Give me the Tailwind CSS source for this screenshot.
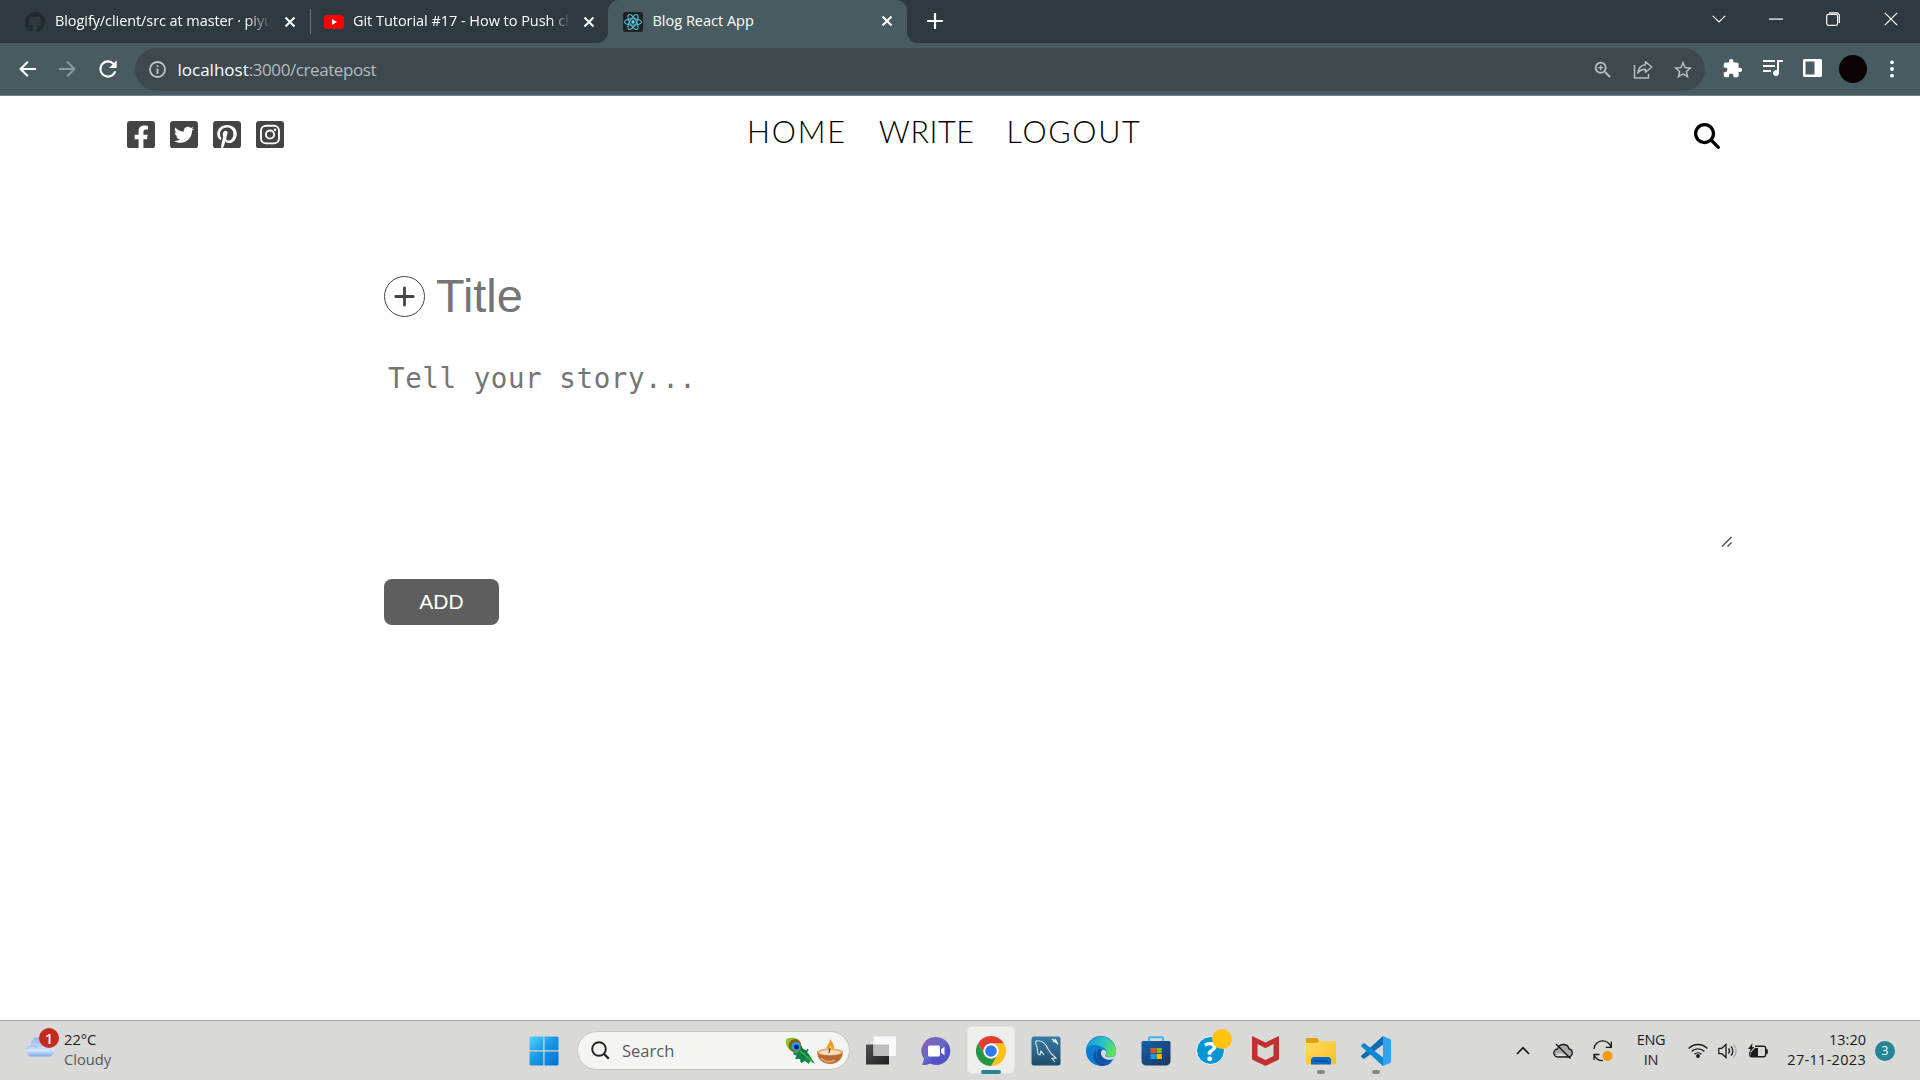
<!DOCTYPE html>
<html lang="en">
<head>
<meta charset="utf-8">
<title>Blog React App</title>
<script src="https://cdn.jsdelivr.net/npm/@tailwindcss/browser@4"></script>
</head>
<body class="flex h-[1080px] w-[1920px] flex-col overflow-hidden bg-white font-['Open_Sans',sans-serif]">

<!-- Tab strip -->
<header class="flex h-[43px] shrink-0 items-start bg-[#2e3a3f] text-[14.5px] leading-[43px] text-white">
  <div class="flex h-[43px] w-[310px] items-center pl-[25px]">
    <svg class="size-5 shrink-0" viewBox="0 0 16 16" fill="#24292e"><path d="M8 0C3.58 0 0 3.58 0 8c0 3.54 2.29 6.53 5.47 7.59.4.07.55-.17.55-.38 0-.19-.01-.82-.01-1.49-2.01.37-2.53-.49-2.69-.94-.09-.23-.48-.94-.82-1.13-.28-.15-.68-.52-.01-.53.63-.01 1.08.58 1.23.82.72 1.21 1.87.87 2.33.66.07-.52.28-.87.51-1.07-1.78-.2-3.64-.89-3.64-3.95 0-.87.31-1.59.82-2.15-.08-.2-.36-1.02.08-2.12 0 0 .67-.21 2.2.82.64-.18 1.32-.27 2-.27s1.36.09 2 .27c1.53-1.04 2.2-.82 2.2-.82.44 1.1.16 1.92.08 2.12.51.56.82 1.27.82 2.15 0 3.07-1.87 3.75-3.65 3.95.29.25.54.73.54 1.48 0 1.07-.01 1.93-.01 2.2 0 .21.15.46.55.38A8.01 8.01 0 0 0 16 8c0-4.42-3.58-8-8-8z"/></svg>
    <div class="ml-[10px] h-[43px] w-[217px] overflow-hidden whitespace-nowrap leading-[41px] tracking-[-0.08px] [mask-image:linear-gradient(to_right,black_88%,transparent)]">Blogify/client/src at master · piyu</div>
    <svg class="ml-[12px] size-3 shrink-0" viewBox="0 0 12 12" stroke="#fff" stroke-width="2"><path d="M1.5 1.5l9 9M10.5 1.5l-9 9"/></svg>
  </div>
  <div class="mt-[9px] h-[25px] w-px bg-[#6b777a]"></div>
  <div class="flex h-[43px] w-[297px] items-center pl-[13px]">
    <svg class="h-[14px] w-5 shrink-0" viewBox="0 0 20 14"><rect width="20" height="14" rx="3.5" fill="#f00"/><path d="M8 4v6l5-3z" fill="#fff"/></svg>
    <div class="ml-[9px] h-[43px] w-[217px] overflow-hidden whitespace-nowrap leading-[41px] tracking-[-0.04px] [mask-image:linear-gradient(to_right,black_91%,transparent)]">Git Tutorial #17 - How to Push ch</div>
    <svg class="ml-[13px] size-3 shrink-0" viewBox="0 0 12 12" stroke="#fff" stroke-width="2"><path d="M1.5 1.5l9 9M10.5 1.5l-9 9"/></svg>
  </div>
  <div class="relative flex h-[43px] w-[299px] items-center rounded-t-[11px] bg-[#485b60] pl-[15px]">
    <svg class="absolute bottom-0 -left-[11px] size-[11px]" viewBox="0 0 11 11" fill="#485b60"><path d="M11 0v11H0A11 11 0 0 0 11 0z"/></svg>
    <svg class="absolute bottom-0 -right-[11px] size-[11px]" viewBox="0 0 11 11" fill="#485b60"><path d="M0 0v11h11A11 11 0 0 1 0 0z"/></svg>
    <svg class="size-5" viewBox="0 0 20 20"><rect width="20" height="20" rx="2" fill="#222"/><g fill="none" stroke="#53c1de" stroke-width="1.1"><ellipse cx="10" cy="10" rx="8.5" ry="3.3"/><ellipse cx="10" cy="10" rx="8.5" ry="3.3" transform="rotate(60 10 10)"/><ellipse cx="10" cy="10" rx="8.5" ry="3.3" transform="rotate(120 10 10)"/></g><circle cx="10" cy="10" r="1.7" fill="#61dafb"/></svg>
    <span class="-mt-[2px] ml-[9.5px] leading-[41px]">Blog React App</span>
    <svg class="absolute top-[15px] left-[273px] size-3" viewBox="0 0 12 12" stroke="#fff" stroke-width="2"><path d="M1.5 1.5l9 9M10.5 1.5l-9 9"/></svg>
  </div>
  <svg class="mt-[13px] ml-[20px] size-4" viewBox="0 0 16 16" stroke="#fff" stroke-width="2.2" stroke-linecap="round"><path d="M8 1v14M1 8h14"/></svg>
  <div class="ml-auto flex h-[37px] items-center pr-[22px]">
    <svg class="mr-[43px] h-2 w-[14px]" viewBox="0 0 14 8" fill="none" stroke="#fff" stroke-width="1.1"><path d="M.8.8L7 7l6.200-6.200"/></svg>
    <svg class="mr-[43px] h-[2px] w-[14px]" viewBox="0 0 14 2"><rect y=".5" width="14" height="1.200" fill="#fff"/></svg>
    <svg class="mr-[44px] size-[14px]" viewBox="0 0 14 14" fill="none" stroke="#fff" stroke-width="1.200"><rect x=".7" y="2.400" width="10.900" height="10.900" rx="1.800"/><path d="M3 .8h7.500a2.800 2.800 0 0 1 2.800 2.800V11"/></svg>
    <svg class="size-[14px]" viewBox="0 0 14 14" stroke="#fff" stroke-width="1.200"><path d="M.8.8l12.400 12.400M13.200.8L.8 13.200"/></svg>
  </div>
</header>

<!-- Toolbar -->
<div class="flex h-[53px] shrink-0 items-start border-b border-[#70848a] bg-[#485b60] pt-[5px]">
  <div class="flex h-[43px] w-[135px] items-center pl-[19px]">
    <svg class="-mt-[2px] h-4 w-[17px]" viewBox="0 0 17 16" fill="none" stroke="#fff" stroke-width="2.100"><path d="M17 8H1.800M8.800.8L1.600 8l7.200 7.200"/></svg>
    <svg class="-mt-[2px] ml-[23px] h-4 w-[17px]" viewBox="0 0 17 16" fill="none" stroke="#8d999c" stroke-width="2.100"><path d="M0 8h15.200M8.200.8L15.400 8l-7.200 7.200"/></svg>
    <svg class="-mt-[2px] ml-[19px] size-[26px]" viewBox="0 0 24 24" fill="#fff"><path d="M17.650 6.350A7.960 7.960 0 0 0 12 4a8 8 0 1 0 7.730 10h-2.080A6 6 0 1 1 12 6c1.660 0 3.140.69 4.220 1.780L13 11h7V4z"/></svg>
  </div>
  <div class="flex h-[43px] w-[1570px] items-center rounded-full bg-[#3d494d] pr-[11px] pl-[14px]">
    <svg class="size-[17px]" viewBox="0 0 17 17"><circle cx="8.500" cy="8.500" r="7.500" fill="none" stroke="#bfc4c6" stroke-width="1.800"/><path d="M7.600 7.500h1.800V13H7.600zM7.600 4.300h1.800v1.800H7.600z" fill="#bfc4c6"/></svg>
    <div class="ml-[11.5px] text-[17px] leading-[42px] text-[#b5bbbd]"><span class="text-white">localhost</span><span class="tracking-[-0.42px]">:3000/createpost</span></div>
    <div class="ml-auto flex items-center">
      <svg class="mr-[19px] size-[22px]" viewBox="0 0 24 24" fill="#b9bfc1"><path d="M15.500 14h-.79l-.28-.27A6.470 6.470 0 0 0 16 9.500 6.500 6.500 0 1 0 9.500 16c1.610 0 3.090-.59 4.230-1.570l.27.28v.79l5 4.990L20.490 19zm-6 0a4.500 4.500 0 1 1 0-9 4.500 4.500 0 0 1 0 9zM10.200 6.700H8.800v2.100H6.700v1.400h2.100v2.100h1.400v-2.100h2.100V8.800h-2.100z"/></svg>
      <svg class="mr-[19px] size-5" viewBox="0 0 20 20" fill="none" stroke="#b9bfc1" stroke-width="1.500" stroke-linejoin="round"><path d="M1.500 5v13h14v-4"/><path d="M12.500 1.800l6.200 5.200-6.200 5.200V9.200C9 9 7 10 4.800 13c.5-4.500 3-7.500 7.700-8.200z"/></svg>
      <svg class="size-[22px]" viewBox="0 0 24 24" fill="#b9bfc1"><path d="M22 9.240l-7.190-.62L12 2 9.190 8.630 2 9.240l5.460 4.730L5.820 21 12 17.270 18.180 21l-1.630-7.030zM12 15.400l-3.760 2.270 1-4.280-3.320-2.880 4.380-.38L12 6.100l1.710 4.040 4.380.38-3.320 2.880 1 4.280z"/></svg>
    </div>
  </div>
  <div class="flex h-[43px] items-center">
    <svg class="-mt-[3px] ml-[17px] size-[21px]" viewBox="0 0 24 24" fill="#fff"><path d="M20.500 11H19V7a2 2 0 0 0-2-2h-4V3.500a2.500 2.500 0 0 0-5 0V5H4a2 2 0 0 0-1.990 2v3.800H3.500a2.700 2.700 0 0 1 0 5.400H2V20a2 2 0 0 0 2 2h3.800v-1.500a2.700 2.700 0 0 1 5.400 0V22H17a2 2 0 0 0 2-2v-4h1.500a2.500 2.500 0 0 0 0-5z"/></svg>
    <svg class="-mt-[3px] ml-5 h-4 w-5" viewBox="0 0 20 16" fill="#fff"><path d="M0 0h12v2H0zM0 5h12v2H0zM0 10h8v2H0zM14 0h6v2h-4v11a3 3 0 1 1-2-2.800z"/></svg>
    <svg class="-mt-[3px] ml-[20px] h-[18px] w-[19px]" viewBox="0 0 19 18"><path fill="#fff" fill-rule="evenodd" d="M1 0h17l1 1v16l-1 1H1l-1-1V1zM2.500 2.500v13h9v-13z"/></svg>
    <div class="-mt-[2px] ml-[17px] size-7 rounded-full bg-[#0a0205]"></div>
    <svg class="-mt-[2px] ml-[23px] h-[18px] w-1" viewBox="0 0 4 18" fill="#fff"><circle cx="2" cy="2.300" r="1.900"/><circle cx="2" cy="9" r="1.900"/><circle cx="2" cy="15.700" r="1.900"/></svg>
  </div>
</div>

<!-- Page -->
<main class="flex min-h-0 flex-1 flex-col">
  <nav class="flex h-[62px] shrink-0 items-start">
    <div class="mt-[24.5px] flex w-[622px] gap-[15px] pl-[127px]">
      <svg class="h-[27.5px] w-7" viewBox="0 32 448 448" preserveAspectRatio="none" fill="#444"><path d="M400 32H48A48 48 0 0 0 0 80v352a48 48 0 0 0 48 48h137.250V327.690h-63V256h63v-54.640c0-62.150 37-96.480 93.670-96.480 27.140 0 55.520 4.840 55.520 4.840v61h-31.270c-30.810 0-40.420 19.120-40.420 38.730V256h68.780l-11 71.690h-57.780V480H400a48 48 0 0 0 48-48V80a48 48 0 0 0-48-48z"/></svg>
      <svg class="h-[27.5px] w-7" viewBox="0 32 448 448" preserveAspectRatio="none" fill="#444"><path d="M400 32H48C21.500 32 0 53.500 0 80v352c0 26.500 21.500 48 48 48h352c26.500 0 48-21.500 48-48V80c0-26.500-21.500-48-48-48zm-48.900 158.800c.2 2.800.2 5.700.2 8.500 0 86.700-66 186.600-186.600 186.600-37.200 0-71.700-10.800-100.700-29.400 5.300.6 10.400.8 15.800.8 30.700 0 58.900-10.400 81.400-28-28.800-.6-53-19.500-61.300-45.500 10.100 1.500 19.200 1.500 29.600-1.200-30-6.100-52.500-32.500-52.500-64.400v-.8c8.700 4.900 18.900 7.900 29.600 8.300a65.447 65.447 0 0 1-29.200-54.600c0-12.200 3.200-23.400 8.900-33.100 32.300 39.800 80.800 65.800 135.200 68.600-9.300-44.500 24-80.600 64-80.600 18.900 0 35.900 7.900 47.900 20.700 14.800-2.800 29-8.300 41.600-15.800-4.900 15.200-15.200 28-28.800 36.100 13.200-1.400 26-5.100 37.800-10.200-8.900 13.100-20.100 24.700-32.900 34z"/></svg>
      <svg class="h-[27.5px] w-7" viewBox="0 32 448 448" preserveAspectRatio="none" fill="#444"><path d="M448 80v352c0 26.500-21.500 48-48 48H154.400c9.800-16.400 22.400-40 27.400-59.300 3-11.500 15.300-58.400 15.300-58.400 8 15.300 31.400 28.200 56.300 28.200 74.100 0 127.400-68.100 127.400-152.700 0-81.100-66.200-141.800-151.400-141.800-106 0-162.200 71.100-162.200 148.600 0 36 19.200 80.800 49.800 95.100 4.700 2.200 7.100 1.200 8.200-3.300.8-3.400 5-20.100 6.800-27.800.6-2.500.3-4.600-1.700-7-10.100-12.300-18.300-34.900-18.300-56 0-54.200 41-106.600 110.900-106.600 60.300 0 102.600 41.100 102.600 99.900 0 66.400-33.500 112.400-77.200 112.400-24.100 0-42.100-19.900-36.400-44.400 6.900-29.200 20.300-60.700 20.300-81.800 0-53-75.500-45.700-75.500 25 0 21.700 7.300 36.500 7.300 36.500-31.400 132.800-36.100 134.500-29.600 192.600l2.200.8H48c-26.500 0-48-21.500-48-48V80c0-26.500 21.500-48 48-48h352c26.500 0 48 21.500 48 48z"/></svg>
      <svg class="h-[27.5px] w-7" viewBox="0 0 28 28" preserveAspectRatio="none"><rect width="28" height="28" rx="3" fill="#444"/><g fill="none" stroke="#fff"><rect x="5" y="4.800" width="18" height="18" rx="5" stroke-width="1.900"/><circle cx="14" cy="13.800" r="4.100" stroke-width="1.900"/></g><circle cx="19" cy="8.900" r="1.200" fill="#fff"/></svg>
    </div>
    <div class="mt-[10px] ml-[125px] flex font-['Lato'] text-[30.500px] leading-[50px] font-light text-black">
      <span class="tracking-[1.800px]">HOME</span><span class="ml-[32px] tracking-[0.6px]">WRITE</span><span class="ml-[32px] tracking-[1.700px]">LOGOUT</span>
    </div>
    <svg class="mt-[27px] mr-[200px] ml-auto size-[26px]" viewBox="0 0 512 512"><path d="M416 208c0 45.900-14.900 88.300-40 122.700L502.600 457.400c12.500 12.500 12.500 32.800 0 45.300s-32.800 12.500-45.300 0L330.700 376c-34.400 25.200-76.800 40-122.700 40C93.100 416 0 322.900 0 208S93.100 0 208 0s208 93.100 208 208zM208 352a144 144 0 1 0 0-288 144 144 0 1 0 0 288z"/></svg>
  </nav>
  <section class="flex flex-col pt-[118px] pl-[384px]">
    <div class="flex h-[41px] items-center">
      <div class="flex size-[41px] items-center justify-center rounded-full border border-[#444]">
        <svg class="size-[21px]" viewBox="0 0 21 21" stroke="#444" stroke-width="2.800" stroke-linecap="round"><path d="M10.500 1.800v17.400M1.800 10.500h17.400"/></svg>
      </div>
      <span class="ml-[11px] font-['Liberation_Sans'] text-[46.875px] leading-[41px] text-[#757575]">Title</span>
    </div>
    <div class="mt-[40px] flex h-[191px] w-[1349px] items-start justify-between">
      <span class="ml-1 font-['DejaVu_Sans_Mono'] text-[27.500px] leading-[43px] tracking-[0.58px] text-[#757575]">Tell your story...</span>
      <svg class="size-3 self-end" viewBox="0 0 12 12" stroke="#555" stroke-width="1.500"><path d="M1 10.500L10.500 1M6.500 10.500l4-4"/></svg>
    </div>
    <div class="mt-[31px] flex h-[46px] w-[115px] items-center justify-center rounded-lg bg-[#5e5e5e] font-['Liberation_Sans'] text-[21px] text-white">ADD</div>
  </section>
</main>

<!-- Taskbar -->
<footer class="flex h-[60px] shrink-0 border-t border-[#a9a9a9] bg-[#d9d9d8] text-[#1b1b1b]">
  <div class="flex h-[59px] w-[529px] pl-[25px]">
    <div class="relative mt-[7px] h-[32px] w-[35px]">
      <svg class="h-[31px] w-[31px]" viewBox="0 0 31 31"><defs><linearGradient id="cl" x1="0" y1="0" x2="0" y2="1"><stop offset="0" stop-color="#8fb4ea"/><stop offset=".7" stop-color="#d5e5fb"/><stop offset="1" stop-color="#7ea8e8"/></linearGradient></defs><path d="M6 28.500a6 6 0 0 1-.5-11.500C6 12.500 9 9 14 9c4 0 7 2 8.500 6A7 7 0 0 1 30 21.500c0 4-3 7-6.500 7z" fill="url(#cl)"/><path d="M1.500 21c3-4 8-4 11-1" fill="none" stroke="#a3c2f0" stroke-width="1.500"/></svg>
      <div class="absolute top-0 left-[14px] flex size-5 items-center justify-center rounded-full bg-[#c42b1c] text-[14px] font-semibold text-white">1</div>
    </div>
    <div class="mt-[8px] ml-1 flex flex-col text-[14.700px] leading-5"><span>22°C</span><span class="text-[#585858]">Cloudy</span></div>
  </div>
  <svg class="mt-[15px] h-[30px] w-[30px]" viewBox="0 0 30 30"><defs><linearGradient id="win" x1="0" y1="0" x2="1" y2="1"><stop offset="0" stop-color="#4fd2fb"/><stop offset=".45" stop-color="#1c9ae6"/><stop offset="1" stop-color="#006fd0"/></linearGradient></defs><path fill="url(#win)" d="M1.500.5h12.800v13.800H.5V1.500zM15.500.5h13l1 1v12.800h-14zM.5 15.500h13.800v14H1.500l-1-1zM15.500 15.500h14v13l-1 1h-13z"/></svg>
  <div class="mt-[10px] ml-[18px] flex h-[39px] w-[273px] items-center rounded-full border border-[#c4c4c3] bg-[#f4f4f3]">
    <svg class="ml-[13px] size-[19px]" viewBox="0 0 19 19" fill="none" stroke="#222" stroke-width="1.900"><circle cx="8" cy="8" r="6.800"/><path d="M12.800 12.800l5 5" stroke-width="2.300"/></svg>
    <span class="ml-[12px] text-[16.500px] leading-[37px] text-[#5a5a5a]">Search</span>
    <svg class="mr-[5px] ml-auto h-[30px] w-[60px]" viewBox="0 0 60 30"><path d="M11 10c8 1 12 5 15 10l5 8-5-3-1 3-4-3-4 2-1-4-5 0 2-3-4-2z" fill="#138a4b"/><path d="M14 16l8-1M17 20l8-1M18 14l-1-4M15 19l-3 3M19 22l-2 4M22 17l2-4" stroke="#0c7040" stroke-width="1.500"/><path d="M2.500 3C8 0 17 2 17 9c0 6-4 9-8 7C5 15 0 8 2.500 3z" fill="#8fc31f"/><ellipse cx="11" cy="9.500" rx="6.200" ry="6.500" fill="#8a5a1c"/><circle cx="12" cy="10.500" r="4.500" fill="#1ba8e8"/><circle cx="12.500" cy="11" r="2.500" fill="#12208c"/><path d="M16 15c5 4 9 7 12 11" stroke="#4cba3c" stroke-width="1.300" fill="none"/><path d="M46 3c4 5 5 8 3 12-2 2-6 1-6.500-2C42 9 46 8 46 3z" fill="#f99b1e"/><path d="M46.500 10c2 3 1 5 0 6-2-1-2-3 0-6z" fill="#ffe56b"/><path d="M33 15c0 8 6 13 13 13s13-5 13-13z" fill="#b96835"/><path d="M37 22c3 4 9 5 14 2" stroke="#e5a15e" stroke-width="2" fill="none"/><ellipse cx="46" cy="16" rx="13" ry="3.600" fill="#e3a86f"/><ellipse cx="46" cy="16.500" rx="10.500" ry="2.500" fill="#f2ddc0"/><path d="M45 17l1-5" stroke="#5b3115"/></svg>
  </div>
  <div class="ml-[3px] grid h-[59px] w-[550px] grid-cols-10">
    <div class="flex items-center justify-center"><svg class="size-[30px]" viewBox="0 0 30 30"><defs><linearGradient id="tv" x1="0" y1="0" x2="1" y2="1"><stop offset="0" stop-color="#505050"/><stop offset="1" stop-color="#1f1f1f"/></linearGradient></defs><path fill="url(#tv)" d="M0 8.500h23v20H0z"/><path fill="#fafafa" d="M7.500.5H30V20H7.500z"/><path fill="#bdbdbd" d="M7.500 8.500H23V20H7.500z"/></svg></div>
    <div class="flex items-center justify-center"><svg class="size-[30px]" viewBox="0 0 30 30"><defs><linearGradient id="ch" x1="0" y1="0" x2="1" y2="1"><stop offset="0" stop-color="#8a5fa8"/><stop offset=".5" stop-color="#6669cc"/><stop offset=".6" stop-color="#5453c4"/></linearGradient></defs><path fill="url(#ch)" d="M15.500 1A14 14 0 1 1 9 27.500C6 29 3.500 29.300 1 29l2-6A14 14 0 0 1 15.500 1z"/><rect x="7" y="9.500" width="12" height="11" rx="1.500" fill="#fff"/><path d="M20 13.500l3.500-3v9l-3.500-3z" fill="#fff"/></svg></div>
    <div class="relative flex items-center justify-center"><div class="absolute top-[5px] left-[4px] h-12 w-12 rounded-[5px] border border-[#e2e2e1] bg-[#eeeeed]"></div><svg class="relative size-[30px]" viewBox="0 0 48 48"><path fill="#e33b2e" d="M24 0a24 24 0 0 1 20.800 12H24a12 12 0 0 0-10.400 18L3.200 12A24 24 0 0 1 24 0z"/><path fill="#fbc116" d="M44.800 12A24 24 0 0 1 24 48l10.400-18A12 12 0 0 0 24 12z"/><path fill="#259647" d="M24 48A24 24 0 0 1 3.200 12l10.400 18A12 12 0 0 0 34.400 30z"/><circle cx="24" cy="24" r="12" fill="#fff"/><circle cx="24" cy="24" r="9.300" fill="#3178f0"/></svg><div class="absolute top-[49px] left-[18px] h-1 w-5 rounded-full bg-[#258495]"></div></div>
    <div class="flex items-center justify-center"><svg class="size-[30px]" viewBox="0 0 30 30"><defs><linearGradient id="my" x1="0" y1="0" x2="0" y2="1"><stop offset="0" stop-color="#3a7ca5"/><stop offset="1" stop-color="#1f4c68"/></linearGradient></defs><rect x=".5" y=".5" width="29" height="29" rx="2.500" fill="url(#my)"/><path d="M5 5c5-1 10 2 12 8 2 4 4 6 8 9l-4 .5 3 3.500M5 5c-1 2 0 4 1 6l1 7 2 1 1-4 3 4" fill="none" stroke="#dbe9f1" stroke-width="1.100"/><path d="M21 3l6 5M24 3l2 4M22 5.500l3-1" stroke="#e8f0f4" stroke-width="1.600"/></svg></div>
    <div class="flex items-center justify-center"><svg class="size-[30px]" viewBox="0 0 30 30"><defs><linearGradient id="eg" x1="0" y1=".3" x2="1" y2=".6"><stop offset="0" stop-color="#1597dc"/><stop offset=".5" stop-color="#2bc3c4"/><stop offset="1" stop-color="#62e350"/></linearGradient></defs><circle cx="15" cy="15" r="15" fill="#0b7cd4"/><path fill="#124f9d" d="M10 14c-2 6 2 13 10 13.500 3 0 6-1 7.500-3.500A15 15 0 0 1 15 30C8 28 5 19 10 14z"/><path fill="url(#eg)" d="M.5 12A15 15 0 0 1 30 15c0 4-3 6-6.500 6-3 0-5-1.500-4-2.500 2-2 1-6.500-3.500-7.500C12 8.500 5 8 .5 12z"/><path fill="#124f9d" d="M13 13c-4 4-3 10 2 13 5 2 10 0 12.500-3-5 2-9 1-11.500-2-2-2-2-5 0-7z"/><path fill="#dbdbda" d="M29.900 17c-.8 3-3 4.500-6.400 4.300-3 0-5.200-1.500-4-2.800 2-2-.5-5.500-3-4.500-3 2-1 7 2 8.500 3.500 2 7 1.500 9.500.2z"/></svg></div>
    <div class="flex items-center justify-center"><svg class="size-[30px]" viewBox="0 0 30 30"><defs><linearGradient id="st" x1="0" y1="0" x2="1" y2="1"><stop offset="0" stop-color="#0f62ab"/><stop offset="1" stop-color="#22345f"/></linearGradient></defs><path d="M8 6V2.500A1.200 1.200 0 0 1 9.200 1.300h11.600A1.200 1.200 0 0 1 22 2.500V6" fill="none" stroke="#35b9ee" stroke-width="2"/><path d="M1.500 5h27l1 1v19a4.500 4.500 0 0 1-4.500 4.500H5A4.500 4.500 0 0 1 .5 25V6z" fill="url(#st)"/><path fill="#f25022" d="M9.500 12h5.300v5.200H9.500z"/><path fill="#7fba00" d="M15.500 12h5.300v5.200h-5.300z"/><path fill="#00a4ef" d="M9.500 18h5.300v5H9.500z"/><path fill="#ffb900" d="M15.500 18h5.300v5h-5.300z"/></svg></div>
    <div class="relative flex items-center justify-center"><div class="flex size-[29px] items-center justify-center rounded-full border-[1.500px] border-white bg-[#0597d5] font-['Open_Sans'] text-[27px] leading-none font-bold text-white">?</div><div class="absolute top-2 left-[29px] size-5 rounded-full bg-[#ffc20e]"></div></div>
    <div class="flex items-center justify-center"><svg class="h-[30px] w-[27px]" viewBox="0 0 27 30"><path fill="#c12f2e" fill-rule="evenodd" d="M0 0l13.500 6.500L27 0v23.500L13.500 30 0 23.500zM5.500 8v12l8 4 8-4V8l-8 4.200z"/></svg></div>
    <div class="relative flex items-center justify-center"><svg class="size-[30px]" viewBox="0 0 30 30"><defs><linearGradient id="fo" x1="0" y1="0" x2="1" y2="1"><stop offset="0" stop-color="#ffdc60"/><stop offset="1" stop-color="#fdbd28"/></linearGradient></defs><path fill="#e0a010" d="M0 3l1-1h10l2.500 3H28l2 1v5H0z"/><path fill="url(#fo)" d="M0 7h11l2.500-2H30v23l-.5.500H0z"/><path fill="#0c69c4" d="M5 28.500V23l2-2h16l2 2v5.500z"/><path d="M8.500 25h13" stroke="#0b4080"/></svg><div class="absolute top-[49px] left-[24px] h-1 w-2 rounded-full bg-[#858585]"></div></div>
    <div class="relative flex items-center justify-center"><svg class="size-[30px]" viewBox="0 0 30 30"><path fill="#0a6db5" d="M1.500 18.500l-1.300 1.300c-.3.500 0 1 .3 1.300l1.600 1.400c.6.400 1.200.3 1.700 0L22 8.500V0z"/><path fill="#0e86d0" d="M1.500 11.500L.2 10.200c-.3-.5 0-1 .3-1.300L2.100 7.500c.6-.4 1.200-.3 1.700 0L22 21.500V30z"/><path fill="#2da3f2" d="M22 0l7 3 1 1v22l-1 1-7 3z"/></svg><div class="absolute top-[49px] left-[24px] h-1 w-2 rounded-full bg-[#858585]"></div></div>
  </div>
  <div class="flex h-[59px] flex-1 items-center pl-[113px]">
    <svg class="h-[9px] w-[14px]" viewBox="0 0 14 9" fill="none" stroke="#1b1b1b" stroke-width="1.800"><path d="M1 8l6-6.300L13 8"/></svg>
    <svg class="ml-[23px] h-4 w-5" viewBox="0 0 20 16"><path d="M5 14a4 4 0 0 1-.5-8C5.500 3 8 1.500 10.500 1.500c3 0 5 2 5.500 4.500 2 .2 3.300 2 3.300 4S17.500 14 15.500 14z" fill="#aaa" stroke="#1b1b1b" stroke-width="1.300"/><path d="M2.500 13C6 9 9 10 14 13z" fill="#ddd"/><path d="M3 1l14.500 14.500" stroke="#1b1b1b" stroke-width="1.500"/></svg>
    <svg class="ml-[19px] h-[22px] w-[22px]" viewBox="0 0 22 22"><g fill="none" stroke="#1b1b1b" stroke-width="1.300"><path d="M2 9a8.700 8.700 0 0 1 17-2M19.300 1.500V7.300h-5.500M2 20v-5.500h5.500M2 14.500c1.500 4 5 6.300 9 6.200"/></g><circle cx="15.500" cy="16" r="5" fill="#fb9a06"/></svg>
    <div class="-mt-[1px] ml-[22px] flex w-[30px] flex-col items-center text-[14.500px] leading-5 tracking-[-0.3px]"><span>ENG</span><span>IN</span></div>
    <svg class="ml-[22px] h-[15px] w-5" viewBox="0 0 20 15" fill="none" stroke="#1b1b1b" stroke-width="1.400"><path d="M.6 5.500a13 13 0 0 1 18.800 0M3.600 8.500a9 9 0 0 1 12.800 0M6.500 11.300a5 5 0 0 1 7 0"/><circle cx="10" cy="13" r="1.200" fill="#1b1b1b"/></svg>
    <svg class="ml-[10px] h-4 w-5" viewBox="0 0 20 16" fill="none" stroke="#1b1b1b" stroke-width="1.300"><path d="M.8 5.300h3L8 1.500v13L3.800 10.700h-3z"/><path d="M10.500 5.500c1.300 1.500 1.300 3.500 0 5M13 3.500c2.500 2.500 2.500 6.500 0 9"/><path d="M15.500 1.500c3.500 3.500 3.500 9.500 0 13" stroke="#aaa"/></svg>
    <svg class="ml-[10px] h-4 w-5" viewBox="0 0 20 16"><path d="M7 3.200h8.500a2.200 2.200 0 0 1 2.200 2.200v6.200a2.200 2.200 0 0 1-2.200 2.200H4A2.200 2.200 0 0 1 1.800 11.600V9" fill="none" stroke="#1b1b1b" stroke-width="1.400"/><path d="M18 6.200h1.800v4.600H18zM3 13V9.500L7 5h3v8zM4.500 0L0 6h2.500l-1 4L6.300 4H4z" fill="#1b1b1b"/></svg>
    <div class="-mt-[2px] ml-5 flex w-[78px] flex-col items-end text-[14.500px] leading-5 whitespace-nowrap"><span>13:20</span><span class="tracking-[0.3px]">27-11-2023</span></div>
    <div class="ml-[9px] flex size-5 items-center justify-center rounded-full bg-[#258495] text-[12px] text-white">3</div>
  </div>
</footer>
</body>
</html>
